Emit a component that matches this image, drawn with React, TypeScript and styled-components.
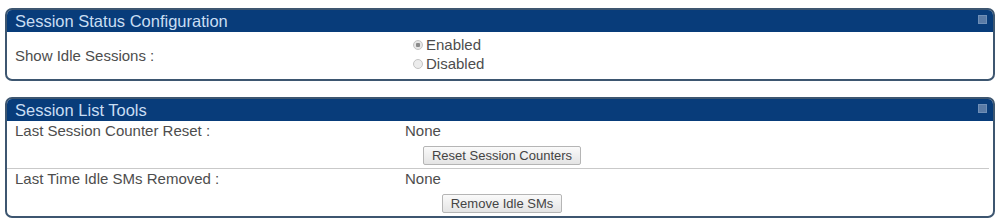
import React from 'react';
import styled, { createGlobalStyle } from 'styled-components';

const GlobalStyle = createGlobalStyle`
  html, body {
    margin: 0;
    padding: 0;
    background: #ffffff;
  }
  body {
    font-family: "Liberation Sans", Arial, sans-serif;
  }
`;

const Page = styled.div`
  width: 998px;
  height: 218px;
  padding: 8px 3px 0 5px;
  box-sizing: border-box;
  display: flex;
  flex-direction: column;
  gap: 16px;
`;

const Panel = styled.section`
  width: 990px;
  box-sizing: border-box;
  border: 2px solid #3d5670;
  border-radius: 7px;
  overflow: hidden;
  background: #fff;
`;

const PanelHeader = styled.div`
  height: 22px;
  background: #083c7a;
  display: flex;
  align-items: center;
  justify-content: space-between;
  padding: 0 6px 0 8px;
  color: #c9def3;
  font-size: 16.5px;
`;

const MinButton = styled.span`
  width: 9px;
  height: 9px;
  background: #5a7ba6;
  border: 1px solid #6f8fb7;
  box-sizing: border-box;
  margin-top: -3px;
`;

const Row = styled.div<{ $divider?: boolean }>`
  display: grid;
  grid-template-columns: 390px 194px;
  padding: 0 8px;
  margin: 0 4px 0 0;
  border-top: ${({ $divider }) => ($divider ? '1px solid #c9c9c9' : 'none')};
  color: #4d4d4d;
  font-size: 15px;
`;

const Label = styled.div<{ $center?: boolean }>`
  display: flex;
  align-items: ${({ $center }) => ($center ? 'center' : 'flex-start')};
  line-height: 20px;
`;

const ValueCell = styled.div`
  display: flex;
  flex-direction: column;
`;

const RadioGroup = styled.div`
  display: flex;
  flex-direction: column;
  padding: 4px 0 6px 8px;
  gap: 1px;
`;

const RadioLine = styled.label`
  display: flex;
  align-items: center;
  gap: 3px;
  line-height: 18px;
  font-size: 15px;
  color: #4d4d4d;
`;

const RadioDot = styled.span<{ $checked?: boolean }>`
  width: 8px;
  height: 8px;
  border-radius: 50%;
  border: 1px solid #c4c4c4;
  background: ${({ $checked }) =>
    $checked ? 'radial-gradient(circle, #8a8a8a 0 2px, #e6e6e6 2.5px)' : '#ececec'};
`;

const Value = styled.div`
  line-height: 20px;
`;

const ActionButton = styled.button`
  align-self: center;
  font-family: "Liberation Sans", Arial, sans-serif;
  font-size: 13px;
  color: #444;
  background: linear-gradient(#fafafa, #e4e4e4);
  border: 1px solid #b5b5b5;
  border-radius: 2px;
  padding: 0 8px;
  height: 19px;
  margin: 5px 0 3px;
`;

export default function App(): JSX.Element {
  return (
    <>
      <GlobalStyle />
      <Page>
        <Panel>
          <PanelHeader>
            <span>Session Status Configuration</span>
            <MinButton />
          </PanelHeader>
          <Row>
            <Label $center>Show Idle Sessions :</Label>
            <RadioGroup>
              <RadioLine>
                <RadioDot $checked />
                Enabled
              </RadioLine>
              <RadioLine>
                <RadioDot />
                Disabled
              </RadioLine>
            </RadioGroup>
          </Row>
        </Panel>
        <Panel>
          <PanelHeader>
            <span>Session List Tools</span>
            <MinButton />
          </PanelHeader>
          <Row>
            <Label>Last Session Counter Reset :</Label>
            <ValueCell>
              <Value>None</Value>
              <ActionButton>Reset Session Counters</ActionButton>
            </ValueCell>
          </Row>
          <Row $divider>
            <Label>Last Time Idle SMs Removed :</Label>
            <ValueCell>
              <Value>None</Value>
              <ActionButton>Remove Idle SMs</ActionButton>
            </ValueCell>
          </Row>
        </Panel>
      </Page>
    </>
  );
}
